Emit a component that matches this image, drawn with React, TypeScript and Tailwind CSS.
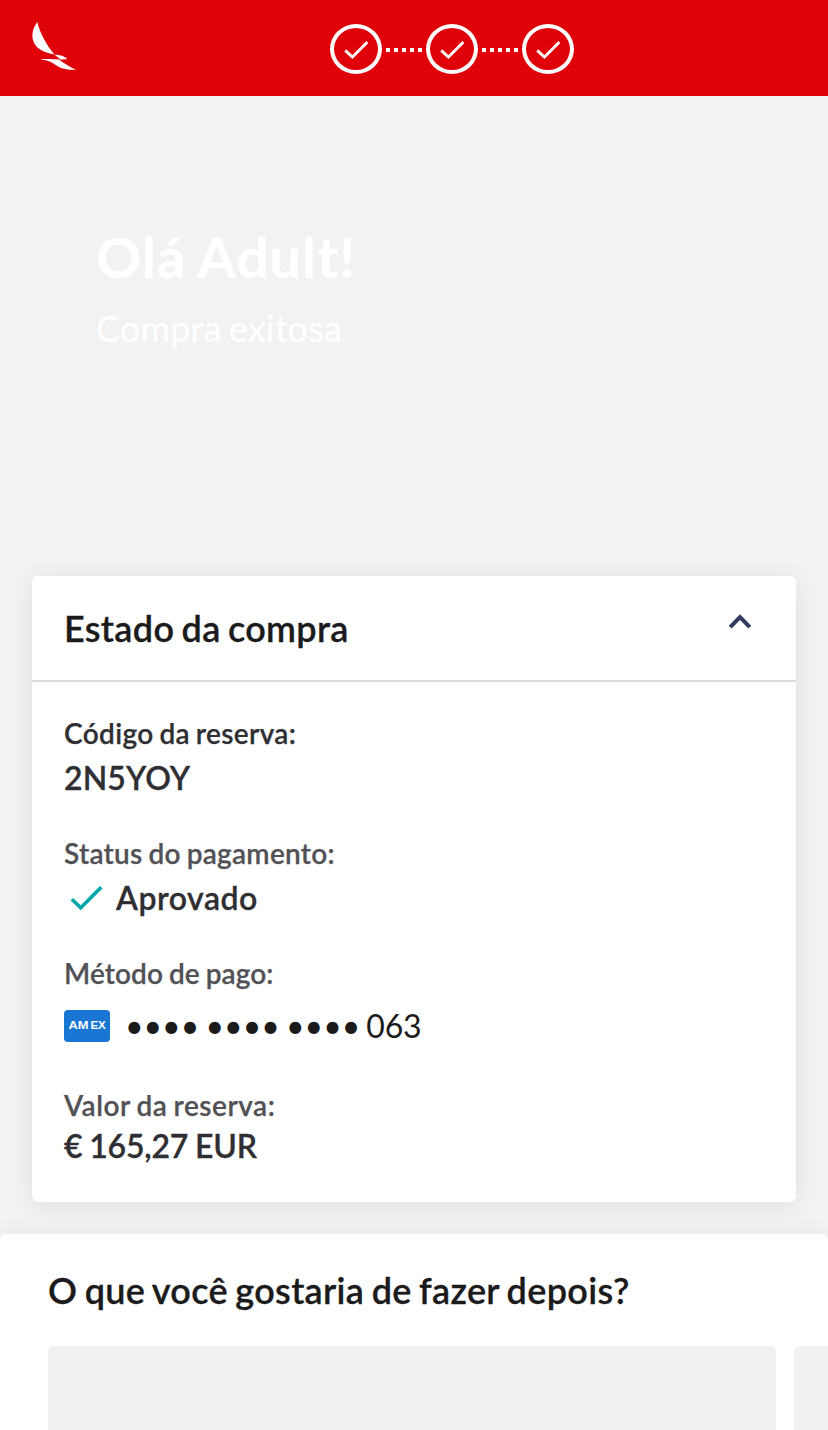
import React from "react";

function BrandMark() {
  return (
    <svg className="h-12 w-11" viewBox="32 22 44 48" fill="#fff" aria-hidden="true">
      <path d="M37.4 22C39.4 32 46.5 45.5 54.4 54.4C47.5 53 40.8 50.8 36.4 46.4C30.6 39.6 31.2 29.8 37.4 22Z" />
      <path d="M54.4 54.4C60.6 54.6 66 56.6 67 59.2L60.4 59.5C58.6 57.6 56.6 56 54.4 54.4Z" />
      <path d="M40.3 59.4C46 58.8 53.5 59.2 59 59.5C63.5 62.9 69.5 66.9 76 69.7C70.5 70.2 63 69.2 59 67C54.6 64.5 51.8 60.6 40.3 59.4Z" />
    </svg>
  );
}

function Step() {
  return (
    <div className="flex h-[50px] w-[52px] items-center justify-center rounded-[50%] border-4 border-white">
      <svg className="mt-[2px] h-[18px] w-6" viewBox="344 41 24 18" fill="none" stroke="#fff" strokeWidth="2.8" aria-hidden="true">
        <path d="M345.2 50.4L352.4 57L367.4 42" />
      </svg>
    </div>
  );
}

function Dots() {
  return (
    <div className="mt-[2px] flex gap-1 px-1">
      {[0, 1, 2, 3, 4].map((dot) => (
        <span key={dot} className="size-1 bg-white" />
      ))}
    </div>
  );
}

export default function App() {
  return (
    <div className="flex h-[1430px] w-[828px] flex-col overflow-hidden bg-[#f2f2f2] font-['Lato',sans-serif] text-[#1b1b1b]">
      <header className="flex h-24 shrink-0 items-start bg-[#df0209] pl-8">
        <div className="pt-[22px]">
          <BrandMark />
        </div>
        <div className="ml-[254px] flex items-center pt-6">
          <Step />
          <Dots />
          <Step />
          <Dots />
          <Step />
        </div>
      </header>

      <section className="flex h-[480px] shrink-0 flex-col pt-[127px] pl-24 text-white">
        <h1 className="text-[56px] leading-[68px] font-bold tracking-[1.1px] [word-spacing:-2px] [-webkit-text-stroke:0.3px]">Olá Adult!</h1>
        <p className="mt-[15px] text-[36px] leading-[44px] tracking-[0.15px] [word-spacing:-2px] [-webkit-text-stroke:0.2px]">Compra exitosa</p>
      </section>

      <section className="mx-8 flex h-[626px] shrink-0 flex-col rounded-md bg-white shadow-[0_4px_24px_rgba(0,0,0,0.08)]">
        <div className="flex h-[106px] items-start justify-between border-b-2 border-[#dcdcdc] pt-[30px] pr-[45px] pl-8">
          <h2 className="text-[36px] leading-[44px] font-semibold tracking-[0.33px] [word-spacing:-2px] [-webkit-text-stroke:0.3px]">Estado da compra</h2>
          <svg className="mt-2 h-4 w-[22px]" viewBox="0 0 22 16" fill="none" stroke="#303a5c" strokeWidth="4" aria-hidden="true">
            <path d="M1.2 13.2L11 3.2L20.8 13.2" />
          </svg>
        </div>
        <div className="px-8 pt-[31px] text-[#2f2f33]">
          <p className="h-[41px] text-[28px] leading-[40px] font-semibold tracking-[0.35px] [word-spacing:-1.5px] [-webkit-text-stroke:0.25px]">Código da reserva:</p>
          <p className="h-12 text-[32px] leading-[48px] font-semibold tracking-[0.1px] [-webkit-text-stroke:0.3px]">2N5YOY</p>
          <p className="mt-[31px] h-[41px] text-[28px] leading-[40px] font-semibold tracking-[0.25px] text-[#515156] [word-spacing:-1.2px] [-webkit-text-stroke:0.25px]">Status do pagamento:</p>
          <div className="flex h-12 items-center">
            <svg className="mr-3 ml-1.5 h-[26px] w-[34px]" viewBox="0 0 34 26" fill="none" stroke="#00a7a9" strokeWidth="3.6" aria-hidden="true">
              <path d="M1.8 14.2L10.8 22.8L31.2 2.2" />
            </svg>
            <p className="text-[32px] leading-[48px] font-semibold tracking-[0.5px] [-webkit-text-stroke:0.3px]">Aprovado</p>
          </div>
          <p className="mt-[31px] h-[41px] text-[28px] leading-[40px] font-semibold tracking-[0.1px] text-[#515156] [word-spacing:-1.2px] [-webkit-text-stroke:0.25px]">Método de pago:</p>
          <div className="mt-[6px] flex h-[52px] items-center">
            <svg className="h-8 w-[46px]" viewBox="0 0 46 32" aria-label="AMEX">
              <rect width="46" height="32" rx="4" fill="#1976d3" />
              <text x="4.6" y="19.2" fill="#fff" fontFamily="Liberation Sans, sans-serif" fontWeight="700" fontSize="10.6" textLength="20" lengthAdjust="spacingAndGlyphs">AM</text>
              <text x="26.4" y="19.2" fill="#fff" fontFamily="Liberation Sans, sans-serif" fontWeight="700" fontSize="10.6" textLength="15.4" lengthAdjust="spacingAndGlyphs">EX</text>
            </svg>
            <p className="ml-[15px] text-[32px] leading-[48px] text-[#1b1b1b] [word-spacing:-1.9px]">
              •••• •••• ••••<span className="ml-[6px] tracking-[-0.2px]">063</span>
            </p>
          </div>
          <p className="mt-[33px] h-[41px] text-[28px] leading-[40px] font-semibold tracking-[0.5px] text-[#515156] [word-spacing:-1.2px] [-webkit-text-stroke:0.25px]">Valor da reserva:</p>
          <p className="text-[32px] leading-[40px] font-semibold tracking-[-0.2px] [word-spacing:-0.9px] [-webkit-text-stroke:0.3px]">€ 165,27 EUR</p>
        </div>
      </section>

      <section className="mt-8 h-[196px] shrink-0 rounded-t-md bg-white pt-[34px] pl-12 shadow-[0_4px_24px_rgba(0,0,0,0.08)]">
        <h2 className="text-[36px] leading-[44px] font-semibold tracking-[0.32px] [word-spacing:-1.9px] [-webkit-text-stroke:0.3px]">O que você gostaria de fazer depois?</h2>
        <div className="mt-[34px] flex gap-[18px] overflow-hidden">
          <div className="h-[84px] w-[728px] shrink-0 rounded-t-md bg-[#f1f1f1]" />
          <div className="h-[84px] w-[728px] shrink-0 rounded-t-md bg-[#f1f1f1]" />
        </div>
      </section>
    </div>
  );
}
